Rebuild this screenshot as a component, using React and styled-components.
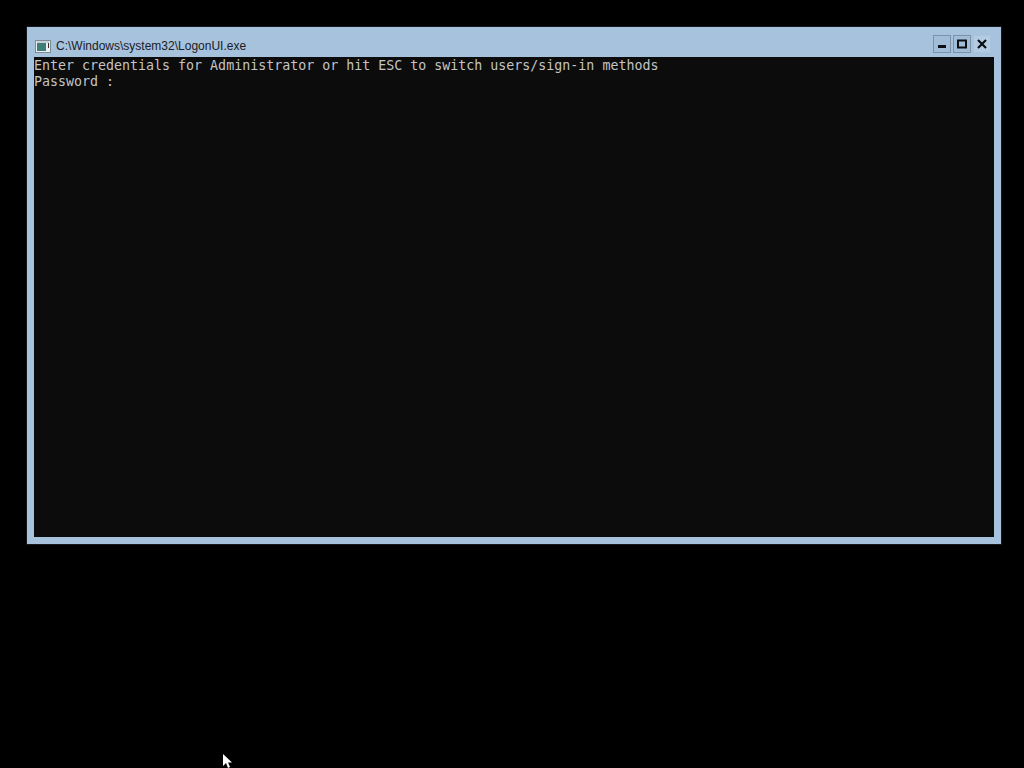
import React from "react";
import styled, { createGlobalStyle } from "styled-components";

const Global = createGlobalStyle`
  html, body { margin: 0; padding: 0; background: #000; }
  #root { width: 1024px; height: 768px; overflow: hidden; }
`;

const Desktop = styled.div`
  position: relative;
  width: 1024px;
  height: 768px;
  background: #000;
  padding: 27px 23px 0 27px;
  box-sizing: border-box;
`;

const ConsoleWindow = styled.div`
  width: 974px;
  height: 517px;
  box-sizing: border-box;
  background: #a6c2dd;
  box-shadow: 0 0 0 1px #14181c;
  padding: 0 7px 7px;
  display: flex;
  flex-direction: column;
`;

const TitleBar = styled.div`
  height: 30px;
  display: flex;
  align-items: center;
  padding-top: 8px;
  box-sizing: border-box;
`;

const TitleText = styled.span`
  font-family: "Liberation Sans", Arial, sans-serif;
  font-size: 12px;
  color: #1a2026;
  margin-left: 5px;
  flex: 1;
  white-space: nowrap;
`;

const AppIcon = styled.svg`
  width: 16px;
  height: 13px;
  margin-left: 1px;
  flex: none;
`;

const Controls = styled.div`
  display: flex;
  gap: 2px;
  margin-right: 3px;
  margin-top: -4px;
`;

const ControlButton = styled.div`
  width: 18px;
  height: 18px;
  box-sizing: border-box;
  border: 1px solid ${(p) => (p.$plain ? "#a9c4de" : "#7b91a8")};
  background: ${(p) => (p.$plain ? "#b4cce2" : "#a2bdd7")};
  display: flex;
  align-items: center;
  justify-content: center;
  svg { width: 12px; height: 12px; display: block; }
`;

const Screen = styled.div`
  width: 960px;
  height: 480px;
  box-sizing: border-box;
  padding-top: 1px;
  background: #0c0c0c;
  color: #c4c4c4;
  font-family: "DejaVu Sans Mono", "Liberation Mono", monospace;
  font-size: 13.3px;
  line-height: 16px;
  white-space: pre;
  overflow: hidden;
`;

const Line = styled.div`
  height: 16px;
`;

const Pointer = styled.svg`
  position: absolute;
  left: 222px;
  top: 754px;
  width: 11px;
  height: 14px;
`;

export default function App() {
  return (
    <>
      <Global />
      <Desktop>
        <ConsoleWindow>
          <TitleBar>
            <AppIcon viewBox="0 0 16 13">
              <rect x="0.5" y="0.5" width="15" height="12" fill="#e8eef2" stroke="#7d8b96" />
              <rect x="2" y="3" width="9" height="8" fill="#3f7f78" />
              <rect x="2" y="1.5" width="12" height="1" fill="#9fb0bc" />
              <rect x="13" y="3" width="1" height="5" fill="#333" />
            </AppIcon>
            <TitleText>C:\Windows\system32\LogonUI.exe</TitleText>
            <Controls>
              <ControlButton>
                <svg viewBox="0 0 12 12"><rect x="2" y="7" width="8" height="3" fill="#0a0f14" /></svg>
              </ControlButton>
              <ControlButton>
                <svg viewBox="0 0 12 12"><rect x="2" y="2.5" width="8" height="7" fill="none" stroke="#0a0f14" strokeWidth="2" /></svg>
              </ControlButton>
              <ControlButton $plain>
                <svg viewBox="0 0 12 12"><path d="M2 2l8 8M10 2l-8 8" stroke="#0a0f14" strokeWidth="2.2" fill="none" /></svg>
              </ControlButton>
            </Controls>
          </TitleBar>
          <Screen>
            <Line>Enter credentials for Administrator or hit ESC to switch users/sign-in methods</Line>
            <Line>Password :</Line>
          </Screen>
        </ConsoleWindow>
        <Pointer viewBox="0 0 11 14">
          <path d="M1 0v12l3-3 2 5 2-1-2-4.5h4z" fill="#fff" />
        </Pointer>
      </Desktop>
    </>
  );
}
